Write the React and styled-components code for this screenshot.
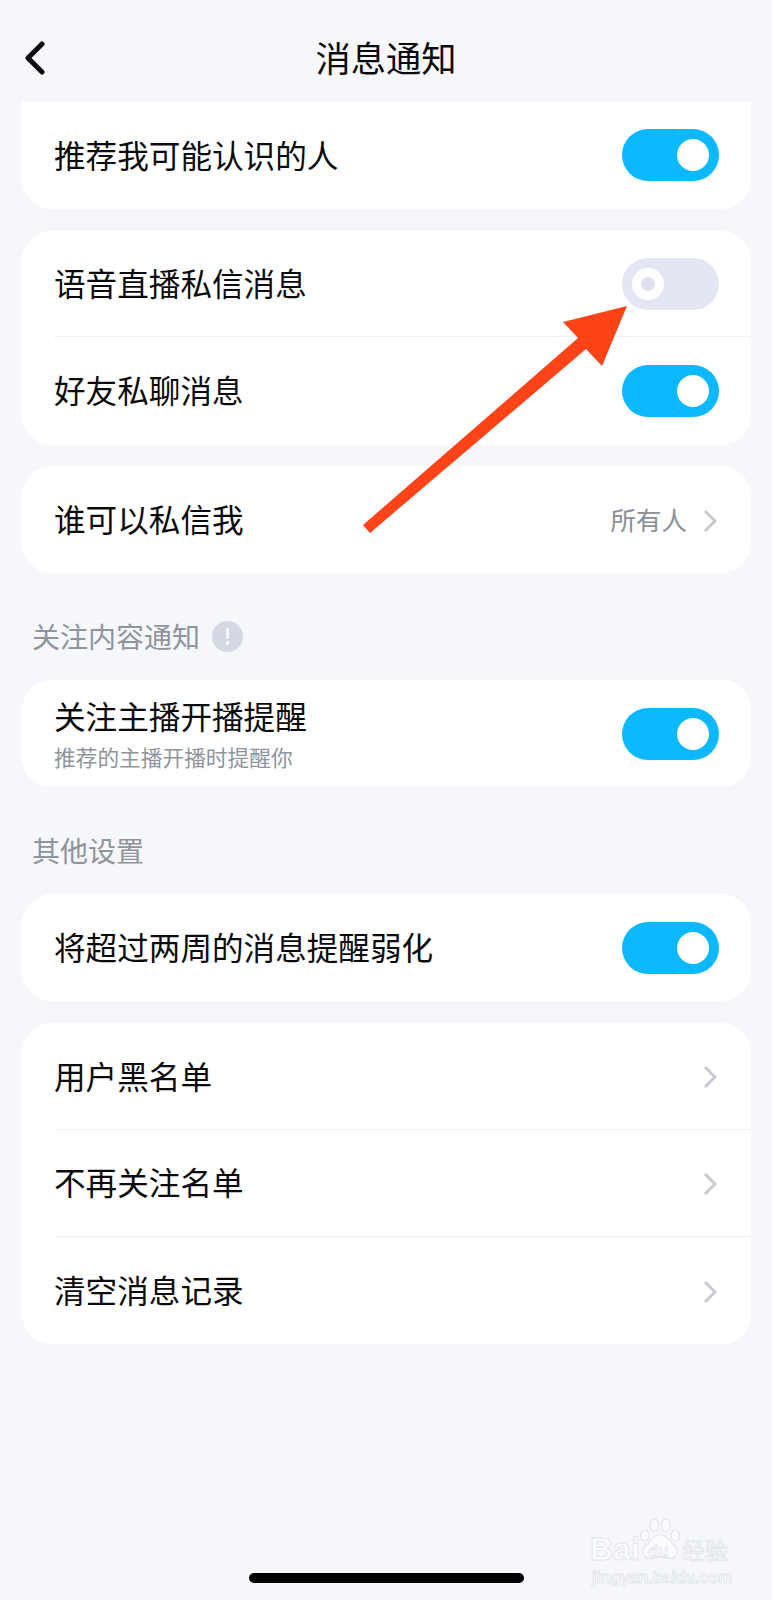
import React from 'react';
import styled, { createGlobalStyle } from 'styled-components';

const Global = createGlobalStyle`
  html, body { margin: 0; padding: 0; background: #f5f7fb; }
  * { box-sizing: border-box; }
`;

const Page = styled.div`
  position: relative;
  width: 772px;
  height: 1600px;
  overflow: hidden;
  display: flex;
  flex-direction: column;
  background: #f5f7fb;
  font-family: "Noto Sans CJK SC", "Noto Sans", sans-serif;
  color: #0b0b0d;
`;

const Header = styled.header`
  flex: none;
  height: 101px;
  padding: 39px 0 0 24px;
  position: relative;
  display: flex;
  justify-content: center;
  align-items: flex-start;
`;

const BackIcon = styled.svg`
  position: absolute;
  left: 24px;
  top: 41px;
  width: 22px;
  height: 34px;
`;

const Title = styled.h1`
  margin: 0;
  font-size: 35.3px;
  font-weight: 400;
  line-height: 36px;
  padding-right: 24px;
`;

const Content = styled.main`
  display: flex;
  flex-direction: column;
  padding: 0 21px 0 22px;
`;

const Card = styled.section`
  background: #fff;
  border-radius: ${(p) => (p.$cut ? '0 0 30px 30px' : '30px')};
  margin-bottom: ${(p) => p.$gap ?? 21}px;
  overflow: hidden;
`;

const Row = styled.div`
  height: ${(p) => p.$h}px;
  padding: 0 32px;
  display: flex;
  align-items: center;
  justify-content: space-between;
`;

const Divider = styled.div`
  height: 1px;
  margin-left: 32px;
  background: #eff1f5;
`;

const TextStack = styled.div`
  display: flex;
  flex-direction: column;
`;

const RowTitle = styled.span`
  font-size: 31.6px;
  line-height: 40px;
  margin-bottom: ${(p) => p.$lift ?? 4}px;
`;

const RowSub = styled.span`
  font-size: 21.7px;
  line-height: 30px;
  margin-top: 5px;
  color: #90949c;
`;

const Switch = styled.div`
  flex: none;
  width: 97px;
  height: 52px;
  border-radius: 26px;
  background: ${(p) => (p.$on ? '#0cb8ff' : '#e4e7f3')};
  display: flex;
  align-items: center;
  justify-content: ${(p) => (p.$on ? 'flex-end' : 'flex-start')};
  padding: 0 10px;
`;

const Knob = styled.div`
  width: 32px;
  height: 32px;
  border-radius: 50%;
  background: #fff;
  display: flex;
  align-items: center;
  justify-content: center;
`;

const KnobDot = styled.div`
  width: 14px;
  height: 14px;
  border-radius: 50%;
  background: #e0e3ef;
`;

const Trailing = styled.div`
  display: flex;
  align-items: center;
  gap: 16px;
  padding-right: 2px;
`;

const Value = styled.span`
  font-size: 25.5px;
  line-height: 32px;
  margin-bottom: 2px;
  color: #8a8e96;
`;

const Chevron = styled.svg`
  width: 14px;
  height: 24px;
  margin-top: 2px;
`;

const SectionHead = styled.div`
  height: 107px;
  padding: 43px 0 0 10px;
  display: flex;
  align-items: flex-start;
  gap: 12px;
`;

const SectionLabel = styled.span`
  font-size: 28px;
  line-height: 40px;
  color: #8f949d;
`;

const InfoIcon = styled.svg`
  width: 31px;
  height: 31px;
  margin-top: 5px;
`;

const HomeBar = styled.div`
  flex: none;
  width: 275px;
  height: 10px;
  border-radius: 5px;
  background: #000;
  margin: auto 0 17px 249px;
`;

const Arrow = styled.svg`
  position: absolute;
  left: 355px;
  top: 300px;
  width: 280px;
  height: 240px;
`;

const Watermark = styled.div`
  position: absolute;
  left: 590px;
  top: 1515px;
  width: 144px;
  display: flex;
  flex-direction: column;
  color: #fbfcfd;
  -webkit-text-stroke: 0.8px #e2e4e8;
`;

const MarkLine = styled.div`
  display: flex;
  align-items: center;
  height: 36px;
  position: relative;
  margin-top: 16px;
`;

const MarkBrand = styled.span`
  font-family: "Liberation Sans", sans-serif;
  font-weight: 700;
  font-size: 32px;
  line-height: 36px;
  width: 50px;
`;

const Paw = styled.svg`
  position: absolute;
  left: 50px;
  top: -13px;
  width: 42px;
  height: 46px;
`;

const MarkDu = styled.span`
  font-family: "Liberation Sans", sans-serif;
  font-weight: 700;
  font-size: 17px;
  line-height: 20px;
  width: 42px;
  margin-top: 6px;
  padding-left: 8px;
  position: relative;
`;

const MarkCn = styled.span`
  font-size: 23px;
  line-height: 30px;
`;

const MarkUrl = styled.span`
  font-family: "Liberation Sans", sans-serif;
  font-weight: 700;
  font-size: 16px;
  line-height: 20px;
  margin-top: 1px;
  padding-left: 2px;
  white-space: nowrap;
`;

const Toggle = ({ on }) => (
  <Switch $on={on}>
    <Knob>{!on && <KnobDot />}</Knob>
  </Switch>
);

const Next = () => (
  <Chevron viewBox="0 0 14 24" fill="none">
    <path d="M2 2l10 10L2 22" stroke="#c6c9cf" strokeWidth="3" />
  </Chevron>
);

const Info = () => (
  <InfoIcon viewBox="0 0 31 31">
    <circle cx="15.5" cy="15.5" r="15.5" fill="#d3d8e3" />
    <path d="M14 7.5h3l-.5 10.5h-2z" fill="#fff" />
    <circle cx="15.5" cy="22" r="1.8" fill="#fff" />
  </InfoIcon>
);

export default function App() {
  return (
    <Page>
      <Global />
      <Header>
        <BackIcon viewBox="0 0 22 34" fill="none">
          <path d="M18 3L4 17l14 14" stroke="#0b0b0d" strokeWidth="5" strokeLinecap="round" strokeLinejoin="round" />
        </BackIcon>
        <Title>消息通知</Title>
      </Header>
      <Content>
        <Card $cut $gap={22}>
          <Row $h={108}>
            <RowTitle $lift={2}>推荐我可能认识的人</RowTitle>
            <Toggle on />
          </Row>
        </Card>
        <Card>
          <Row $h={105}>
            <RowTitle>语音直播私信消息</RowTitle>
            <Toggle />
          </Row>
          <Divider />
          <Row $h={108}>
            <RowTitle>好友私聊消息</RowTitle>
            <Toggle on />
          </Row>
        </Card>
        <Card $gap={0}>
          <Row $h={107}>
            <RowTitle>谁可以私信我</RowTitle>
            <Trailing>
              <Value>所有人</Value>
              <Next />
            </Trailing>
          </Row>
        </Card>
        <SectionHead>
          <SectionLabel>关注内容通知</SectionLabel>
          <Info />
        </SectionHead>
        <Card $gap={0}>
          <Row $h={107}>
            <TextStack>
              <RowTitle $lift={2}>关注主播开播提醒</RowTitle>
              <RowSub>推荐的主播开播时提醒你</RowSub>
            </TextStack>
            <Toggle on />
          </Row>
        </Card>
        <SectionHead>
          <SectionLabel>其他设置</SectionLabel>
        </SectionHead>
        <Card $gap={22}>
          <Row $h={107}>
            <RowTitle>将超过两周的消息提醒弱化</RowTitle>
            <Toggle on />
          </Row>
        </Card>
        <Card>
          <Row $h={106}>
            <RowTitle $lift={2}>用户黑名单</RowTitle>
            <Trailing><Next /></Trailing>
          </Row>
          <Divider />
          <Row $h={106}>
            <RowTitle>不再关注名单</RowTitle>
            <Trailing><Next /></Trailing>
          </Row>
          <Divider />
          <Row $h={107}>
            <RowTitle>清空消息记录</RowTitle>
            <Trailing><Next /></Trailing>
          </Row>
        </Card>
      </Content>
      <HomeBar />
      <Arrow viewBox="0 0 280 240">
        <polygon points="8,225 15,233 231,49 247,66 272,6 208,22 223,38" fill="#ff4318" />
      </Arrow>
      <Watermark>
        <MarkLine>
          <MarkBrand>Bai</MarkBrand>
          <Paw viewBox="0 0 44 50" preserveAspectRatio="none" fill="none" stroke="#e2e4e8" strokeWidth="1.2">
            <ellipse cx="5" cy="19" rx="4.5" ry="6" fill="#fbfcfd" />
            <ellipse cx="15" cy="8" rx="4.5" ry="7" fill="#fbfcfd" />
            <ellipse cx="27" cy="8" rx="4.5" ry="7" fill="#fbfcfd" />
            <ellipse cx="37" cy="19" rx="4.5" ry="6" fill="#fbfcfd" />
            <path d="M21 18c7 0 10 8 15 12 6 6 2 15-6 14-4 0-6-2-9-2s-5 2-9 2c-8 1-12-8-6-14 5-4 8-12 15-12z" fill="#fbfcfd" />
          </Paw>
          <MarkDu>du</MarkDu>
          <MarkCn>经验</MarkCn>
        </MarkLine>
        <MarkUrl>jingyan.baidu.com</MarkUrl>
      </Watermark>
    </Page>
  );
}
